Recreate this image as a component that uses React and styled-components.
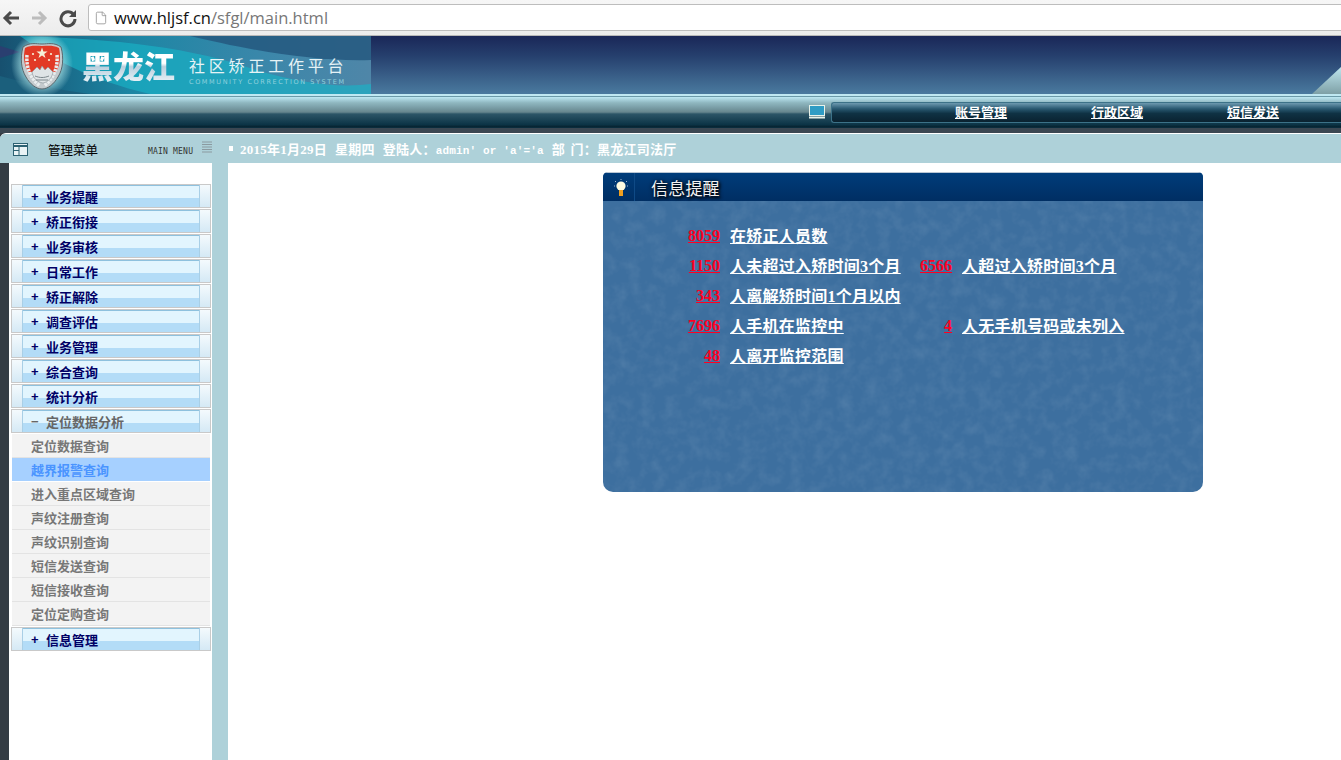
import React from 'react'
import styled, { createGlobalStyle } from 'styled-components'
import { File } from 'lucide-react'

const CJK = `"Liberation Serif", "Noto Sans CJK SC", serif`

const GlobalStyle = createGlobalStyle`
  html, body {
    margin: 0;
    padding: 0;
    height: 100%;
    overflow: hidden;
    background: #fff;
  }
  #root { height: 100%; }
  * { box-sizing: border-box; }
`

const Page = styled.div`
  height: 760px;
  display: flex;
  flex-direction: column;
  background: #343c44;
  overflow: hidden;
`

/* browser chrome */
const ChromeBar = styled.div`
  height: 36px;
  flex: none;
  display: flex;
  align-items: center;
  padding: 0 0 0 1px;
  background: linear-gradient(#f6f6f6, #ececec);
  border-bottom: 1px solid #b8b8b8;
`
const NavIcon = styled.svg`
  width: 20px;
  height: 20px;
  flex: none;
  margin-right: ${p => p.$gap}px;
`
const AddressBar = styled.div`
  flex: 1;
  height: 27px;
  margin-right: -6px;
  display: flex;
  align-items: center;
  gap: 6px;
  padding-left: 5px;
  background: #fff;
  border: 1px solid #bdbdbd;
  border-radius: 3px;
  font-family: "Open Sans", sans-serif;
  font-size: 16.5px;
  color: #111;
`
const UrlPath = styled.span`
  color: #777;
`

/* banner */
const Banner = styled.div`
  position: relative;
  height: 58px;
  flex: none;
  display: flex;
  background: linear-gradient(#1a2758, #26406e 35%, #4a7a9f);
  overflow: hidden;
`
const LogoPanel = styled.div`
  position: relative;
  width: 371px;
  flex: none;
  display: flex;
  align-items: center;
  padding-left: 20px;
`
const LogoBack = styled.svg`
  position: absolute;
  inset: 0;
  width: 371px;
  height: 58px;
`
const Emblem = styled.svg`
  position: relative;
  width: 44px;
  height: 49px;
  flex: none;
  margin-top: 1px;
`
const BigTitle = styled.div`
  position: relative;
  margin-left: 18px;
  font-family: "Noto Sans CJK SC", sans-serif;
  font-weight: 900;
  font-size: 31px;
  line-height: 34px;
  width: 99px;
  white-space: nowrap;
  background: linear-gradient(#ffffff 45%, #b9cfdd 55%, #e8f2f7);
  -webkit-background-clip: text;
  background-clip: text;
  color: transparent;
`
const TitleStack = styled.div`
  position: relative;
  margin-left: 8px;
  display: flex;
  flex-direction: column;
  gap: 4px;
  margin-top: 11px;
`
const SubTitle = styled.div`
  font-family: "Noto Sans CJK SC", sans-serif;
  font-size: 16px;
  line-height: 18px;
  letter-spacing: 3.8px;
  color: #e6f3f6;
  white-space: nowrap;
`
const EnTitle = styled.div`
  font-family: "DejaVu Sans", sans-serif;
  font-size: 6.5px;
  line-height: 8px;
  letter-spacing: 1.6px;
  color: #8fd0dc;
  white-space: nowrap;
`
const CornerWedge = styled.div`
  position: absolute;
  right: 0;
  bottom: 0;
  width: 29px;
  height: 27px;
  clip-path: polygon(100% 0, 100% 100%, 0 100%);
  background: linear-gradient(#bfe6ee, #7ea0a6);
`

/* nav bar */
const NavBar = styled.div`
  position: relative;
  height: 33px;
  flex: none;
  display: flex;
  align-items: center;
  justify-content: flex-end;
  gap: 6px;
  padding-top: 1px;
  border-top: 2px solid #bfe8f2;
  background: linear-gradient(#6b9aa8 0 1px, #bde8f3 1px, #8fb7c0 22%, #66868e 52%, #2c5567 58%, #0c3446 92%, #06222f 100%);
`
const MonitorIcon = styled.svg`
  width: 16px;
  height: 14px;
  flex: none;
`
const NavPanel = styled.div`
  width: 510px;
  height: 21px;
  flex: none;
  display: flex;
  align-items: center;
  gap: 84px;
  padding-left: 123px;
  border: 1px solid #3c7288;
  border-right: none;
  border-radius: 3px 0 0 3px;
  background: linear-gradient(#6d9ab0, #2a5a72 30%, #0f3244 55%, #0a2230);
`
const NavLink = styled.a`
  font-family: ${CJK};
  font-weight: 700;
  font-size: 13px;
  line-height: 15px;
  color: #fff;
  text-decoration: underline;
  white-space: nowrap;
`
const DarkStrip = styled.div`
  height: 6px;
  flex: none;
  border-top: 1px solid #0a2c3c;
  background: #3b4752;
`

/* main area */
const Main = styled.div`
  flex: 1;
  min-height: 0;
  display: flex;
  flex-direction: column;
  border-top: 1px solid #fff;
  border-radius: 6px 0 0 0;
  background: #aed1d9;
  overflow: hidden;
`
const SubHeader = styled.div`
  height: 29px;
  flex: none;
  display: flex;
  align-items: center;
  padding-top: 2px;
  background: #aed1d9;
`
const MenuHead = styled.div`
  width: 228px;
  flex: none;
  display: flex;
  align-items: center;
  padding-left: 13px;
`
const MenuHeadIcon = styled.svg`
  width: 15px;
  height: 13px;
  flex: none;
  margin-right: 20px;
`
const MenuHeadLabel = styled.span`
  font-family: "Noto Sans CJK SC", sans-serif;
  font-size: 12.5px;
  color: #000;
  width: 100px;
  white-space: nowrap;
`
const MenuHeadEn = styled.span`
  font-family: "DejaVu Sans Mono", monospace;
  font-size: 8px;
  letter-spacing: 0.2px;
  color: #333;
  width: 54px;
  white-space: nowrap;
  padding-top: 3px;
`
const Lines = styled.svg`
  width: 10px;
  height: 12px;
  flex: none;
  margin-top: -5px;
`
const StatusLine = styled.div`
  display: flex;
  align-items: center;
  gap: 8px;
  padding-left: 1px;
  margin-top: -2px;
  font-family: ${CJK};
  font-weight: 700;
  font-size: 13px;
  letter-spacing: 0.25px;
  color: #fff;
  white-space: pre;
`
const Bullet = styled.i`
  width: 4px;
  height: 5px;
  margin-right: -1px;
  background: #fff;
`
const LatinRun = styled.span`
  font-family: "Liberation Mono", monospace;
  font-size: 11px;
  letter-spacing: 0.15px;
`
const SpacedRun = styled.span`
  word-spacing: 2px;
`
const Body = styled.div`
  flex: 1;
  min-height: 0;
  display: flex;
`
const LeftEdge = styled.div`
  width: 9px;
  flex: none;
  background: #343c44;
`
const Sidebar = styled.div`
  width: 203px;
  flex: none;
  padding: 21px 1px 0 2px;
  display: flex;
  flex-direction: column;
  background: #fff;
`
const Divider = styled.div`
  width: 16px;
  flex: none;
  background: #aed1d9;
`
const Content = styled.div`
  flex: 1;
  padding: 9px 0 0 375px;
  background: #fff;
`

/* sidebar */
const Group = styled.div`
  height: 24px;
  flex: none;
  display: flex;
  margin-bottom: 1px;
  border: 1px solid #c9c9c9;
  font-family: ${CJK};
  font-weight: 700;
  font-size: 13px;
  color: ${p => (p.$open ? '#666' : '#000066')};
`
const GroupCap = styled.div`
  width: 11px;
  flex: none;
  background: linear-gradient(#f4fafd, #d5e9f5);
  border-${p => p.$side}: 1px solid #a9cfe6;
`
const GroupMain = styled.div`
  flex: 1;
  display: flex;
  align-items: center;
  padding: 0 0 1px 8px;
  border-top: 1px solid #8ec1de;
  background: linear-gradient(#e2f5fe 0 58%, #b3dcf7 58% 100%);
`
const Sign = styled.span`
  width: 15px;
  flex: none;
  line-height: 13px;
  font-family: "Liberation Sans", sans-serif;
`
const SubList = styled.div`
  flex: none;
  margin: 0 1px 1px;
`
const SubItem = styled.div`
  height: 24px;
  display: flex;
  align-items: center;
  padding: 0 0 0 19px;
  border-bottom: 1px solid ${p => (p.$active ? '#fff' : '#e3e3e3')};
  font-family: ${CJK};
  font-weight: 700;
  font-size: 13px;
  color: ${p => (p.$active ? '#4a94ff' : '#777')};
  background: ${p => (p.$active ? '#a6d0ff' : '#f3f3f3')};
`

/* info panel */
const Panel = styled.div`
  position: relative;
  width: 600px;
  height: 320px;
  border-radius: 5px 5px 10px 10px;
  background: #3d6f9f;
  overflow: hidden;
`
const Texture = styled.svg`
  position: absolute;
  inset: 0;
  width: 100%;
  height: 100%;
  opacity: 0.09;
`
const PanelHead = styled.div`
  position: relative;
  height: 29px;
  display: flex;
  align-items: center;
  border-top: 1px solid #b9c6d4;
  background: linear-gradient(#003c7a, #002e63);
`
const BulbCell = styled.div`
  width: 32px;
  height: 100%;
  flex: none;
  display: flex;
  align-items: center;
  padding-left: 11px;
  margin-right: 16px;
  border-right: 1px solid #0f4a86;
`
const Bulb = styled.svg`
  width: 14px;
  height: 19px;
  flex: none;
  margin-top: 3px;
`
const PanelTitle = styled.span`
  font-family: "Noto Sans CJK SC", sans-serif;
  font-size: 17px;
  color: #f2f2f2;
  letter-spacing: 0.2px;
  text-shadow: 2px 2px 3px #000, 0 0 4px #000;
`
const Stats = styled.div`
  position: relative;
  display: grid;
  grid-template-columns: 117px 200px 32px 1fr;
  grid-auto-rows: 30px;
  padding-top: 20px;
  align-items: center;
  font-family: ${CJK};
  font-weight: 700;
  font-size: 16px;
`
const StatNum = styled.a`
  justify-self: end;
  color: #ff0022;
  text-decoration: underline;
  white-space: nowrap;
`
const StatText = styled.a`
  justify-self: start;
  margin: 0 0 2px 10px;
  letter-spacing: 0.25px;
  color: #fff;
  text-decoration: underline;
  white-space: nowrap;
`

const groups = ['业务提醒', '矫正衔接', '业务审核', '日常工作', '矫正解除', '调查评估', '业务管理', '综合查询', '统计分析']
const subItems = ['定位数据查询', '越界报警查询', '进入重点区域查询', '声纹注册查询', '声纹识别查询', '短信发送查询', '短信接收查询', '定位定购查询']

const stats = [
  [['8059', '在矫正人员数']],
  [['1150', '人未超过入矫时间3个月'], ['6566', '人超过入矫时间3个月']],
  [['343', '人离解矫时间1个月以内']],
  [['7696', '人手机在监控中'], ['4', '人无手机号码或未列入']],
  [['48', '人离开监控范围']],
]

const MenuGroup = ({ label, open }) => (
  <Group $open={open}>
    <GroupCap $side="right" />
    <GroupMain>
      <Sign>{open ? '−' : '+'}</Sign>
      {label}
    </GroupMain>
    <GroupCap $side="left" />
  </Group>
)

const App = () => (
  <Page>
    <GlobalStyle />
    <ChromeBar>
      <NavIcon $gap={8} viewBox="0 0 20 20">
        <path d="M18 10H5M10 4l-6 6 6 6" fill="none" stroke="#4a4a4a" strokeWidth="3" />
      </NavIcon>
      <NavIcon $gap={9} viewBox="0 0 20 20">
        <path d="M3 10h12M10 4l6 6-6 6" fill="none" stroke="#bcbcbc" strokeWidth="3" />
      </NavIcon>
      <NavIcon $gap={10} viewBox="0 0 20 20">
        <path d="M15.5 6.5A7 7 0 1 0 17 11" fill="none" stroke="#4a4a4a" strokeWidth="3" />
        <path d="M18 2v7h-7z" fill="#4a4a4a" />
      </NavIcon>
      <AddressBar>
        <File size={14} color="#999" strokeWidth={1.5} />
        <span>www.hljsf.cn<UrlPath>/sfgl/main.html</UrlPath></span>
      </AddressBar>
    </ChromeBar>

    <Banner>
      <LogoPanel>
        <LogoBack viewBox="0 0 371 58">
          <defs>
            <linearGradient id="lb" x1="0" x2="1" y1="0" y2="0">
              <stop offset="0" stopColor="#17506f" />
              <stop offset="0.35" stopColor="#1c86a4" />
              <stop offset="0.7" stopColor="#3a87aa" />
              <stop offset="1" stopColor="#4f86a8" />
            </linearGradient>
            <radialGradient id="glow">
              <stop offset="0.6" stopColor="#b8f0f0" stopOpacity="0.7" />
              <stop offset="1" stopColor="#b8f0f0" stopOpacity="0" />
            </radialGradient>
          </defs>
          <rect width="371" height="58" fill="url(#lb)" />
          <path d="M190 0C240 12 310 26 371 24V0z" fill="#24587f" opacity="0.85" />
          <path d="M20 0C90 2 180 8 250 32 300 48 340 52 371 48V58H150C90 44 50 22 20 0z" fill="#19b2c6" opacity="0.65" />
          <path d="M0 10L20 16 0 22z" fill="#2a3f70" />
          <path d="M0 40C30 48 60 54 90 58H0z" fill="#1b5f7c" />
          <ellipse cx="42" cy="28" rx="31" ry="33" fill="url(#glow)" />
        </LogoBack>
        <Emblem viewBox="0 0 44 49">
          <path d="M3 6C10 1 16 3 22 3s12-2 19 3c3 11 2 22-3 30-4 7-10 12-16 12S10 43 6 36C1 28 0 17 3 6z" fill="#c4cacd" stroke="#59666c" />
          <path d="M5 7c6-3 11-2 17-2s11-1 17 2c2 9 1 17-3 24H8C4 24 3 16 5 7z" fill="#e23a26" />
          <path d="M22 6.5l1.4 4h4.2l-3.4 2.5 1.3 4-3.5-2.5-3.5 2.5 1.3-4-3.4-2.5h4.2z" fill="#f6f1d8" />
          <g fill="#f6f1d8">
            <circle cx="13" cy="13" r="1.1" /><circle cx="31" cy="13" r="1.1" />
            <circle cx="15" cy="19" r="1.1" /><circle cx="29" cy="19" r="1.1" />
          </g>
          <path d="M7 14c-1 12 3 23 13 31M37 14c1 12-3 23-13 31" fill="none" stroke="#e9edee" strokeWidth="3.5" strokeDasharray="2.5 1" />
          <path d="M12 31l5-5 3 3 2-4 3 4 3-3 5 5c-1 6-5 10-10 11-6-1-10-5-11-11z" fill="#dfe4e6" stroke="#8a9498" strokeWidth="0.6" />
          <path d="M15 35c5 2 9 2 14 0M16 39h12" stroke="#7c878c" fill="none" />
        </Emblem>
        <BigTitle>黑龙江</BigTitle>
        <TitleStack>
          <SubTitle>社区矫正工作平台</SubTitle>
          <EnTitle>COMMUNITY CORRECTION SYSTEM</EnTitle>
        </TitleStack>
      </LogoPanel>
      <CornerWedge />
    </Banner>

    <NavBar>
      <MonitorIcon viewBox="0 0 16 14">
        <rect x="0.5" y="0.5" width="15" height="10" fill="#2f9cc4" stroke="#e7f2ea" />
        <path d="M0 12.5h16" stroke="#e7f2ea" strokeWidth="2" />
      </MonitorIcon>
      <NavPanel>
        <NavLink>账号管理</NavLink>
        <NavLink>行政区域</NavLink>
        <NavLink>短信发送</NavLink>
      </NavPanel>
    </NavBar>
    <DarkStrip />

    <Main>
      <SubHeader>
        <MenuHead>
          <MenuHeadIcon viewBox="0 0 15 13">
            <rect x="0.5" y="0.5" width="14" height="12" fill="#e9f3f5" stroke="#2d6273" />
            <path d="M0 3h15" stroke="#2d6273" strokeWidth="2" />
            <path d="M6 3v10M1 7.5h5" stroke="#2d6273" />
          </MenuHeadIcon>
          <MenuHeadLabel>管理菜单</MenuHeadLabel>
          <MenuHeadEn>MAIN MENU</MenuHeadEn>
          <Lines viewBox="0 0 10 12">
            <path d="M0 1h10M0 3.5h10M0 6h10M0 8.5h10M0 11h10" stroke="#8b9aa0" />
          </Lines>
        </MenuHead>
        <StatusLine>
          <Bullet />
          <span>2015年1月29日</span>
          <span>星期四</span>
          <span>登陆人：<LatinRun>admin' or 'a'='a</LatinRun></span>
          <SpacedRun>部 门：黑龙江司法厅</SpacedRun>
        </StatusLine>
      </SubHeader>
      <Body>
        <LeftEdge />
        <Sidebar>
          {groups.map(g => <MenuGroup key={g} label={g} />)}
          <MenuGroup label="定位数据分析" open />
          <SubList>
            {subItems.map((s, i) => <SubItem key={s} $active={i === 1}>{s}</SubItem>)}
          </SubList>
          <MenuGroup label="信息管理" />
        </Sidebar>
        <Divider />
        <Content>
          <Panel>
            <Texture>
              <filter id="mottle">
                <feTurbulence type="fractalNoise" baseFrequency="0.08" numOctaves="3" seed="4" />
                <feColorMatrix values="0 0 0 0 1  0 0 0 0 1  0 0 0 0 1  1.6 0 0 0 -0.6" />
              </filter>
              <rect width="100%" height="100%" filter="url(#mottle)" />
            </Texture>
            <PanelHead>
              <BulbCell>
                <Bulb viewBox="0 0 14 19">
                  <circle cx="7" cy="7" r="4.6" fill="#fffbe0" />
                  <rect x="5" y="11" width="4" height="6" fill="#f0a020" />
                  <path d="M7 0v1M1 2l1 1M13 2l-1 1M0 7h1M13 7h1" stroke="#9fb6cf" />
                </Bulb>
              </BulbCell>
              <PanelTitle>信息提醒</PanelTitle>
            </PanelHead>
            <Stats>
              {stats.map(row => (
                <React.Fragment key={row[0][0]}>
                  <StatNum>{row[0][0]}</StatNum>
                  <StatText>{row[0][1]}</StatText>
                  {row[1] ? <StatNum>{row[1][0]}</StatNum> : <span />}
                  {row[1] ? <StatText>{row[1][1]}</StatText> : <span />}
                </React.Fragment>
              ))}
            </Stats>
          </Panel>
        </Content>
      </Body>
    </Main>
  </Page>
)

export default App
